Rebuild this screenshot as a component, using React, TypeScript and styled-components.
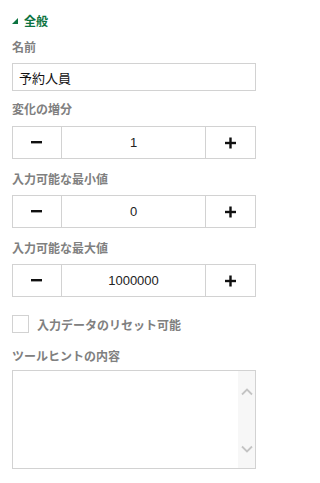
import React from 'react';
import styled, { createGlobalStyle } from 'styled-components';

const GlobalStyle = createGlobalStyle`
  html, body {
    margin: 0;
    padding: 0;
    background: #fff;
  }
  body {
    font-family: 'Noto Sans CJK JP', 'Liberation Sans', sans-serif;
  }
`;

const Panel = styled.div`
  width: 269px;
  padding: 10px 13px 0 12px;
  box-sizing: border-box;
  display: flex;
  flex-direction: column;
`;

const SectionHeader = styled.div`
  display: flex;
  align-items: center;
  gap: 6px;
  height: 20px;
  color: #0b7340;
  font-size: 12px;
  font-weight: bold;
`;

const Triangle = styled.span`
  width: 0;
  height: 0;
  border-left: 6px solid transparent;
  border-bottom: 6px solid #0b7340;
  margin-top: 2px;
`;

const Field = styled.div<{ $top: number; $gap: number }>`
  display: flex;
  flex-direction: column;
  gap: ${(p) => p.$gap}px;
  margin-top: ${(p) => p.$top}px;
`;

const Label = styled.label`
  height: 16px;
  line-height: 16px;
  font-size: 12px;
  font-weight: bold;
  color: #808080;
`;

const TextInput = styled.input`
  box-sizing: border-box;
  width: 100%;
  height: 28px;
  border: 1px solid #d2d2d2;
  padding: 0 6px;
  font-family: 'Noto Sans CJK JP', 'Liberation Sans', sans-serif;
  font-size: 13px;
  color: #111;
  outline: none;
`;

const Stepper = styled.div`
  display: grid;
  grid-template-columns: 48px 1fr 49px;
  height: 33px;
  box-sizing: border-box;
  border: 1px solid #d2d2d2;
`;

const StepButton = styled.button`
  display: flex;
  align-items: center;
  justify-content: center;
  border: none;
  background: #fff;
  padding: 0;
  cursor: pointer;
`;

const StepValue = styled.div`
  display: flex;
  align-items: center;
  justify-content: center;
  border-left: 1px solid #d2d2d2;
  border-right: 1px solid #d2d2d2;
  font-family: 'Liberation Sans', Arial, sans-serif;
  font-size: 13px;
  color: #222;
`;

const CheckRow = styled.label`
  display: flex;
  align-items: center;
  gap: 8px;
  margin-top: 18px;
  height: 18px;
  font-size: 12px;
  font-weight: bold;
  color: #808080;
`;

const CheckBox = styled.span`
  width: 17px;
  height: 18px;
  box-sizing: border-box;
  border: 1px solid #d2d2d2;
  background: #fff;
`;

const AreaBox = styled.div`
  display: flex;
  height: 99px;
  box-sizing: border-box;
  border: 1px solid #d2d2d2;
`;

const TextArea = styled.textarea`
  flex: 1;
  border: none;
  resize: none;
  outline: none;
  padding: 4px 6px;
  font-family: 'Noto Sans CJK JP', 'Liberation Sans', sans-serif;
  font-size: 13px;
`;

const ScrollTrack = styled.div`
  width: 17px;
  background: #f7f7f7;
  display: flex;
  flex-direction: column;
  justify-content: space-between;
  align-items: center;
  padding: 17px 0 15px;
`;

function Minus() {
  return (
    <svg width="12" height="3" viewBox="0 0 12 3">
      <rect x="0" y="0" width="11" height="2.4" fill="#111" />
    </svg>
  );
}

function Plus() {
  return (
    <svg width="12" height="12" viewBox="0 0 12 12">
      <rect x="0" y="4.8" width="11" height="2.4" fill="#111" />
      <rect x="4.3" y="0.5" width="2.4" height="11" fill="#111" />
    </svg>
  );
}

function Chevron(props: { up?: boolean }) {
  return (
    <svg width="12" height="8" viewBox="0 0 12 8">
      <path
        d={props.up ? 'M1 6.5 L6 1.5 L11 6.5' : 'M1 1.5 L6 6.5 L11 1.5'}
        fill="none"
        stroke="#c4c4c4"
        strokeWidth="1.8"
      />
    </svg>
  );
}

function NumberStepper(props: { value: string }) {
  return (
    <Stepper>
      <StepButton aria-label="decrease">
        <Minus />
      </StepButton>
      <StepValue>{props.value}</StepValue>
      <StepButton aria-label="increase">
        <Plus />
      </StepButton>
    </Stepper>
  );
}

export default function App() {
  return (
    <>
      <GlobalStyle />
      <Panel>
        <SectionHeader>
          <Triangle />
          全般
        </SectionHeader>

        <Field $top={9} $gap={8}>
          <Label>名前</Label>
          <TextInput defaultValue="予約人員" />
        </Field>

        <Field $top={10} $gap={9}>
          <Label>変化の増分</Label>
          <NumberStepper value="1" />
        </Field>

        <Field $top={12} $gap={8}>
          <Label>入力可能な最小値</Label>
          <NumberStepper value="0" />
        </Field>

        <Field $top={12} $gap={8}>
          <Label>入力可能な最大値</Label>
          <NumberStepper value="1000000" />
        </Field>

        <CheckRow>
          <CheckBox />
          入力データのリセット可能
        </CheckRow>

        <Field $top={15} $gap={6}>
          <Label>ツールヒントの内容</Label>
          <AreaBox>
            <TextArea />
            <ScrollTrack>
              <Chevron up />
              <Chevron />
            </ScrollTrack>
          </AreaBox>
        </Field>
      </Panel>
    </>
  );
}
